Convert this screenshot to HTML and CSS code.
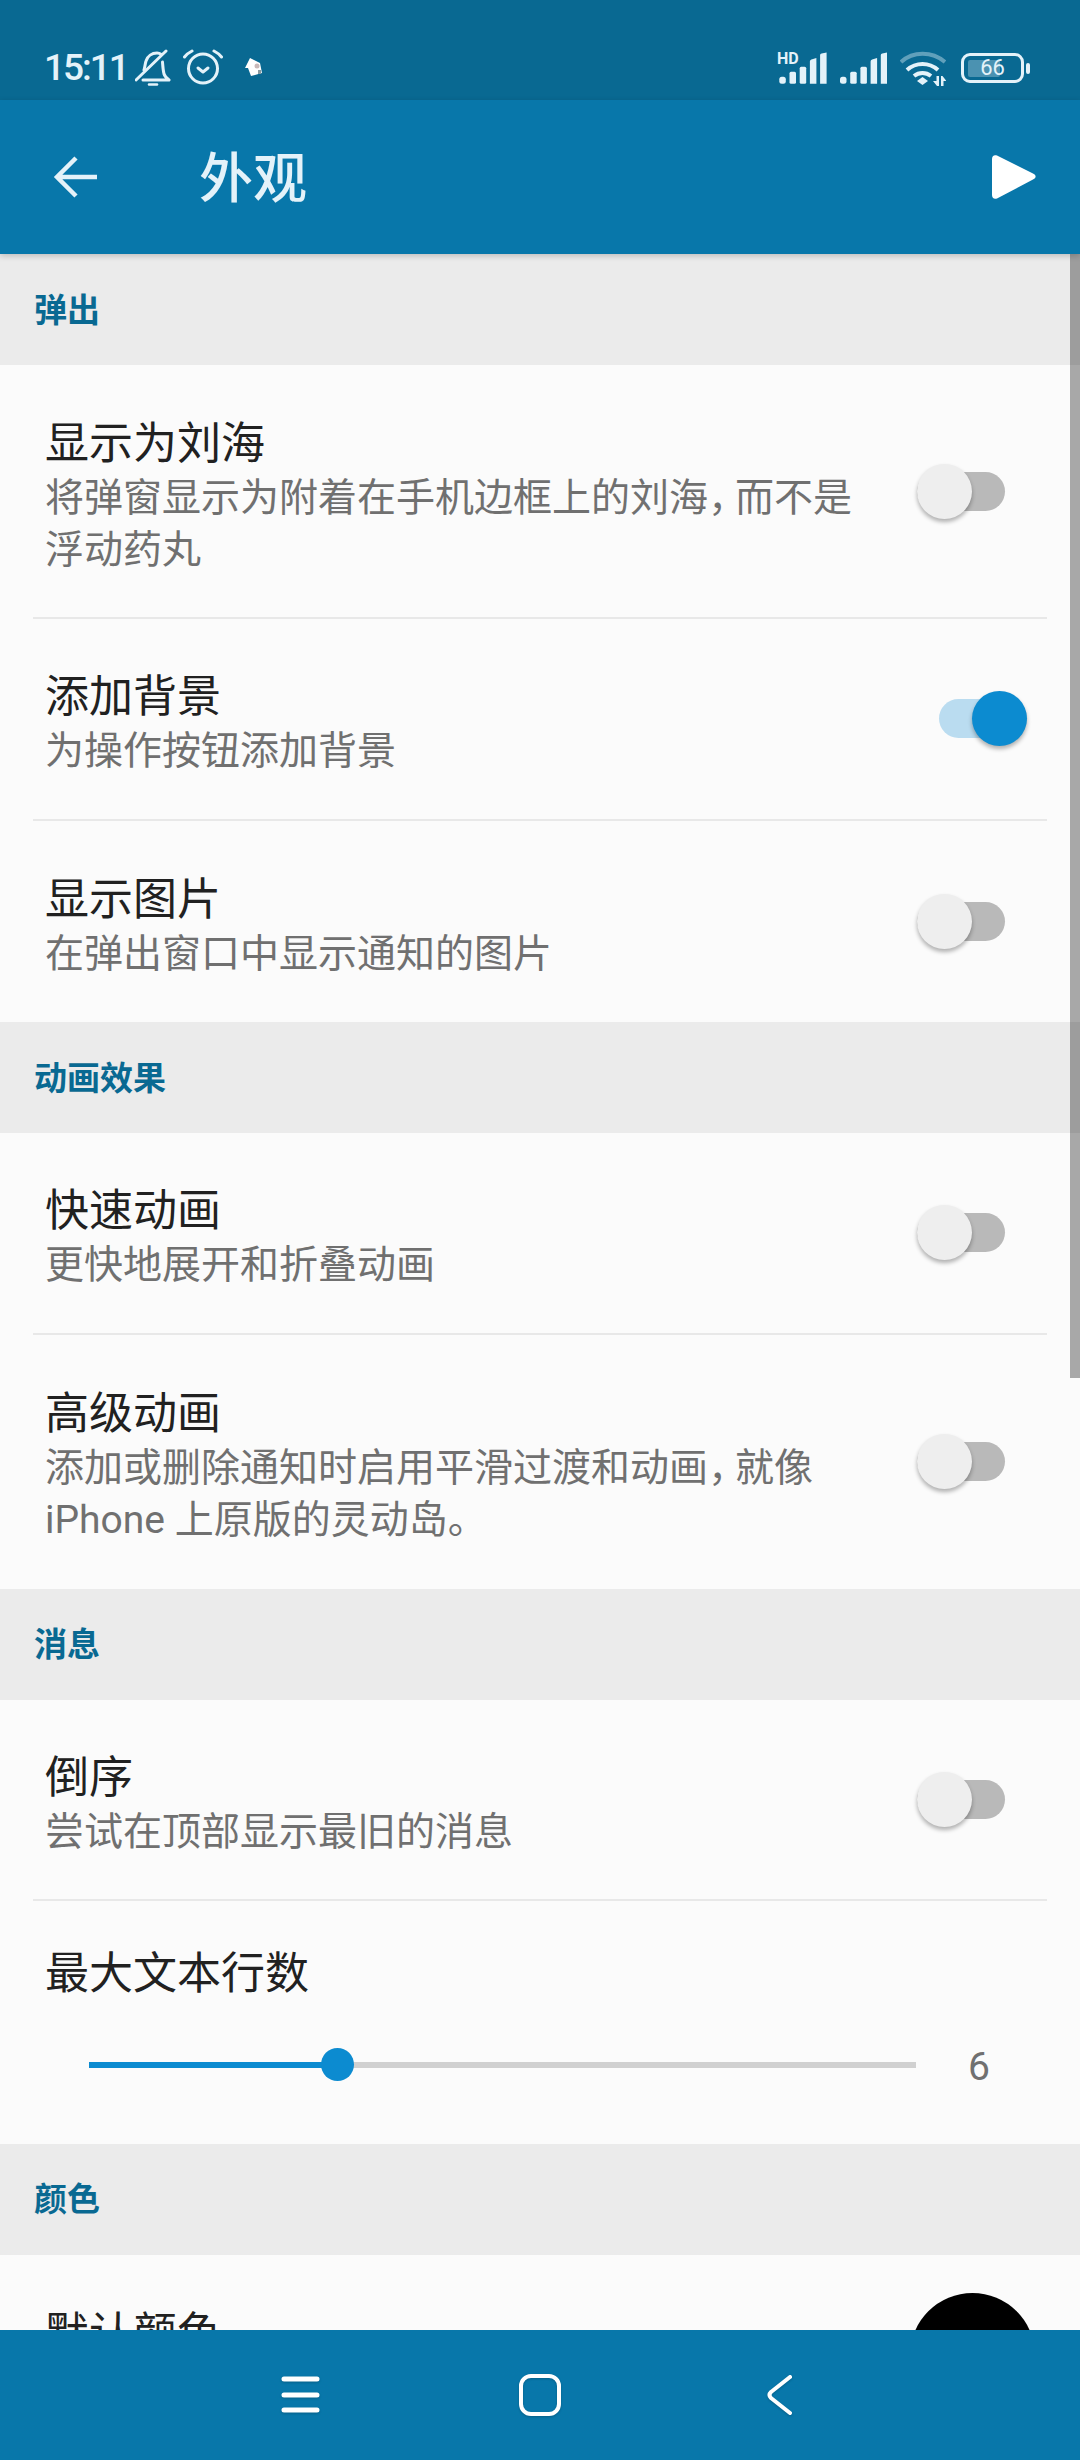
FILE: index.html
```html
<!DOCTYPE html>
<html lang="zh-CN">
<head>
  <meta charset="UTF-8" />
  <meta name="viewport" content="width=device-width, initial-scale=1" />
  <title>外观</title>
  <link rel="stylesheet" href="styles.css">
</head>
<body>
  <div class="status-bar">
    <div class="status-left">
      <span class="clock">15:11</span>
      <svg class="bell" width="36" height="38" viewBox="0 0 36 38" fill="none" stroke="#e4f2f9" stroke-width="3" stroke-linecap="round" stroke-linejoin="round">
        <path d="M9 21c1-3 1-6 2-9 1.500-5 6-8 11-8 1.500 0 3 .5 4.500 1.500M27.500 13c.3 4 .5 8 1.500 12 .6 2 2.500 4 5 6H8"/>
        <path d="M1 31 31 2"/>
        <path d="M14 35.500h8" stroke-width="2.500"/>
      </svg>
      <svg class="alarm" width="40" height="38" viewBox="0 0 40 38" fill="none" stroke="#e4f2f9" stroke-width="3" stroke-linecap="round" stroke-linejoin="round">
        <circle cx="20" cy="19.500" r="14.500"/>
        <path d="M15 19 20 23l5-4"/>
        <path d="M1.500 8C3.500 5.500 6 3.500 9 2M38.500 8c-2-2.500-4.500-4.500-7.500-6"/>
      </svg>
      <svg class="notify" width="20" height="20" viewBox="0 0 20 20">
        <path d="M1 10 6 0l10 5 2 10-11 3-3-8z" fill="#fff"/>
        <circle cx="13" cy="8" r="2.500" fill="#c9b8b8"/>
        <path d="M14 12h3v4h-3z" fill="#8a9aa0"/>
      </svg>
    </div>
    <div class="status-right">
      <div class="signal-hd">
        <span class="hd">HD</span>
        <svg width="50" height="32" viewBox="0 0 50 32" fill="#e4f2f9">
          <rect x="2.300" y="24.700" width="6.500" height="7" rx="2.500"/>
          <rect x="12.500" y="19.700" width="6.500" height="12" rx="1.500"/>
          <rect x="22.700" y="14.700" width="6.500" height="17" rx="1.500"/>
          <path d="M32.900 9.500q0-1.500 1.500-2l5-1.500v25.700h-6.500z"/>
          <path d="M43.100 3q0-1.200 1.500-1.500l5-1v31.200h-6.500z"/>
        </svg>
      </div>
      <svg width="47" height="32" viewBox="0 0 47 32" fill="#e4f2f9">
        <rect x="0" y="24.700" width="6.500" height="7" rx="2.500"/>
        <rect x="10.200" y="19.700" width="6.500" height="12" rx="1.500"/>
        <rect x="20.400" y="14.700" width="6.500" height="17" rx="1.500"/>
        <path d="M30.600 9.500q0-1.500 1.500-2l5-1.500v25.700h-6.500z"/>
        <path d="M40.800 3q0-1.200 1.500-1.500l5-1v31.200h-6.500z"/>
      </svg>
      <svg class="wifi" width="46" height="36" viewBox="0 0 46 36" fill="none" stroke="#e4f2f9" stroke-width="4">
        <path d="M1 12C13 1 32 1 45 12" stroke-opacity=".4"/>
        <path d="M7 20c9-8 22-8 31 0"/>
        <path d="M14 26c5-4 12-4 17 0"/>
        <g fill="#e4f2f9" stroke="none">
          <path d="M17 31l5.500-4 5.500 4-5.500 4z"/>
          <path d="M33 31h3.500v-5h2.500v10h-2z"/>
          <path d="M41 26h1.500l4 5h-3v5H41z"/>
        </g>
      </svg>
      <div class="battery">
        <div class="battery-body">
          <div class="battery-level"></div>
          <span class="battery-text">66</span>
        </div>
        <div class="battery-cap"></div>
      </div>
    </div>
  </div>

  <header class="app-bar">
    <svg class="back" width="44" height="44" viewBox="0 0 44 44" fill="none" stroke="#e4f2f9" stroke-width="4.500">
      <path d="M44 22H4M23 3 4 22l19 19"/>
    </svg>
    <h1>外观</h1>
    <svg class="play" width="44" height="44" viewBox="0 0 44 44">
      <path d="M0 4c0-3 2-4.500 5-3.500l36 18c3.500 1.500 3.500 4.500 0 6L5 43.500C2 44.500 0 43 0 40z" fill="#fff"/>
    </svg>
  </header>

  <main class="content">
    <div class="scrollbar"></div>

    <h2 class="section">弹出</h2>
    <div class="row tall">
      <div class="row-text">
        <div class="row-title">显示为刘海</div>
        <div class="row-sub">将弹窗显示为附着在手机边框上的刘海<span class="comma">，</span>而不是<br>浮动药丸</div>
      </div>
      <div class="switch"><div class="knob"></div></div>
    </div>
    <div class="row">
      <div class="row-text">
        <div class="row-title">添加背景</div>
        <div class="row-sub">为操作按钮添加背景</div>
      </div>
      <div class="switch on"><div class="knob"></div></div>
    </div>
    <div class="row last">
      <div class="row-text">
        <div class="row-title">显示图片</div>
        <div class="row-sub">在弹出窗口中显示通知的图片</div>
      </div>
      <div class="switch"><div class="knob"></div></div>
    </div>

    <h2 class="section">动画效果</h2>
    <div class="row">
      <div class="row-text">
        <div class="row-title">快速动画</div>
        <div class="row-sub">更快地展开和折叠动画</div>
      </div>
      <div class="switch"><div class="knob"></div></div>
    </div>
    <div class="row tall last">
      <div class="row-text">
        <div class="row-title">高级动画</div>
        <div class="row-sub">添加或删除通知时启用平滑过渡和动画<span class="comma">，</span>就像<br>iPhone 上原版的灵动岛。</div>
      </div>
      <div class="switch"><div class="knob"></div></div>
    </div>

    <h2 class="section">消息</h2>
    <div class="row">
      <div class="row-text">
        <div class="row-title">倒序</div>
        <div class="row-sub">尝试在顶部显示最旧的消息</div>
      </div>
      <div class="switch"><div class="knob"></div></div>
    </div>
    <div class="slider-row">
      <div class="row-title">最大文本行数</div>
      <div class="slider-line">
        <div class="slider">
          <div class="slider-fill"></div>
          <div class="slider-thumb"></div>
        </div>
        <span class="slider-value">6</span>
      </div>
    </div>

    <h2 class="section">颜色</h2>
    <div class="row color-row">
      <div class="row-title">默认颜色</div>
      <div class="color-dot"></div>
    </div>
  </main>

  <nav class="nav-bar">
    <svg width="40" height="40" viewBox="0 0 40 40" stroke="#fff" stroke-width="5" stroke-linecap="round">
      <path d="M4 4h33M4 20h33M4 35h33"/>
    </svg>
    <svg width="42" height="42" viewBox="0 0 42 42" fill="none" stroke="#fff" stroke-width="4">
      <rect x="2" y="2" width="38" height="38" rx="10"/>
    </svg>
    <svg width="40" height="42" viewBox="0 0 40 42" fill="none" stroke="#fff" stroke-width="4" stroke-linecap="round" stroke-linejoin="round">
      <path d="M30 3 11 18q-3 3 0 6l19 15"/>
    </svg>
  </nav>
</body>
</html>
```

FILE: styles.css
```css
* {
  box-sizing: border-box;
}

html,
body {
  margin: 0;
  height: 100%;
}

body {
  width: 1080px;
  height: 2460px;
  display: flex;
  flex-direction: column;
  overflow: hidden;
  background: #fbfbfb;
  font-family: Roboto, "Noto Sans CJK SC", sans-serif;
  color: #212121;
}

.status-bar {
  height: 100px;
  flex: none;
  display: flex;
  justify-content: space-between;
  align-items: center;
  padding: 36px 50px 0 44px;
  background: #096992;
}

.status-left,
.status-right {
  display: flex;
  align-items: center;
}

.clock {
  width: 91px;
  font-size: 37px;
  font-weight: 500;
  letter-spacing: -2px;
  line-height: 40px;
  color: #e4f2f9;
}

.alarm {
  margin-left: 12px;
}

.notify {
  margin-left: 21px;
}

.status-right {
  gap: 13px;
}

.signal-hd {
  position: relative;
  display: flex;
}

.hd {
  position: absolute;
  left: 0;
  top: 0;
  font-size: 16px;
  font-weight: 700;
  line-height: 13px;
  color: #e4f2f9;
}

.battery {
  display: flex;
  align-items: center;
  gap: 2px;
  margin-left: 2px;
}

.battery-body {
  position: relative;
  width: 63px;
  height: 30px;
  border: 3px solid #e4f2f9;
  border-radius: 9px;
  display: flex;
  align-items: center;
  justify-content: center;
}

.battery-level {
  position: absolute;
  left: 4px;
  top: 4px;
  bottom: 3px;
  width: 32px;
  border-radius: 2px;
  background: rgba(228, 242, 249, 0.3);
}

.battery-text {
  position: relative;
  font-size: 22px;
  line-height: 24px;
  color: #e4f2f9;
}

.battery-cap {
  width: 4px;
  height: 11px;
  border-radius: 2px;
  background: #e4f2f9;
}

.app-bar {
  height: 154px;
  flex: none;
  position: relative;
  z-index: 2;
  display: flex;
  align-items: center;
  padding: 0 44px 0 53px;
  background: #0877aa;
  box-shadow: 0 2px 6px rgba(0, 0, 0, 0.2);
}

.app-bar h1 {
  flex: 1;
  margin: 0 0 0 102px;
  padding-top: 6px;
  font-size: 54px;
  font-weight: 500;
  line-height: 60px;
  color: #e4f2f9;
}

.content {
  flex: 1;
  min-height: 0;
  position: relative;
  overflow: hidden;
}

.scrollbar {
  position: absolute;
  top: 0;
  right: 0;
  width: 10px;
  height: 1124px;
  background: rgba(0, 0, 0, 0.33);
}

.section {
  height: 111px;
  margin: 0;
  padding: 0 0 4px 34px;
  display: flex;
  align-items: center;
  background: #ebebeb;
  font-size: 33px;
  font-weight: 700;
  color: #096992;
}

.row {
  position: relative;
  height: 201.600px;
  margin: 0 33px;
  padding: 0 42px 0 12px;
  display: flex;
  align-items: center;
  justify-content: space-between;
  border-bottom: 2px solid #e8e8e8;
}

.row.tall {
  height: 254px;
}

.row.last {
  border-bottom: none;
}

.row-text {
  flex: 1;
  padding-top: 9px;
}

.row-title {
  font-size: 44px;
  line-height: 56px;
  color: #212121;
}

.row-sub {
  font-size: 39px;
  line-height: 52px;
  color: #707070;
}

.comma {
  letter-spacing: -12px;
}

.switch {
  position: relative;
  width: 88px;
  height: 39px;
  border-radius: 20px;
  background: #b9b9b9;
}

.knob {
  position: absolute;
  left: 0;
  top: -8px;
  width: 55px;
  height: 55px;
  border-radius: 50%;
  background: #eeeeee;
  box-shadow: 0 3px 4px rgba(0, 0, 0, 0.3);
}

.switch.on {
  background: #badcf0;
  left: 22px;
}

.switch.on .knob {
  left: auto;
  right: 0;
  background: #0c8bd0;
}

.slider-row {
  height: 242.400px;
  padding: 45px 45px 0;
}

.slider-line {
  display: flex;
  align-items: center;
  margin-top: 39px;
  padding-left: 44px;
}

.slider {
  position: relative;
  width: 827px;
  height: 6px;
  background: #d0d0d0;
}

.slider-fill {
  width: 248px;
  height: 100%;
  background: #0c8bd0;
}

.slider-thumb {
  position: absolute;
  left: 232px;
  top: -14px;
  width: 33px;
  height: 33px;
  border-radius: 50%;
  background: #0c8bd0;
}

.slider-value {
  margin-left: 52px;
  padding-top: 4px;
  font-size: 39px;
  line-height: 44px;
  color: #707070;
}

.color-row {
  align-items: flex-start;
  height: 300px;
  padding-top: 38px;
  padding-right: 12px;
  border: none;
}

.color-row .row-title {
  margin-top: 13px;
}

.color-dot {
  width: 125px;
  height: 125px;
  border-radius: 50%;
  background: #000;
}

.nav-bar {
  height: 130px;
  flex: none;
  position: relative;
  z-index: 2;
  display: flex;
  align-items: center;
  justify-content: center;
  gap: 199px;
  background: #0877aa;
}

.nav-bar svg {
  filter: drop-shadow(0 1px 1px rgba(0, 0, 0, 0.2));
}
```
